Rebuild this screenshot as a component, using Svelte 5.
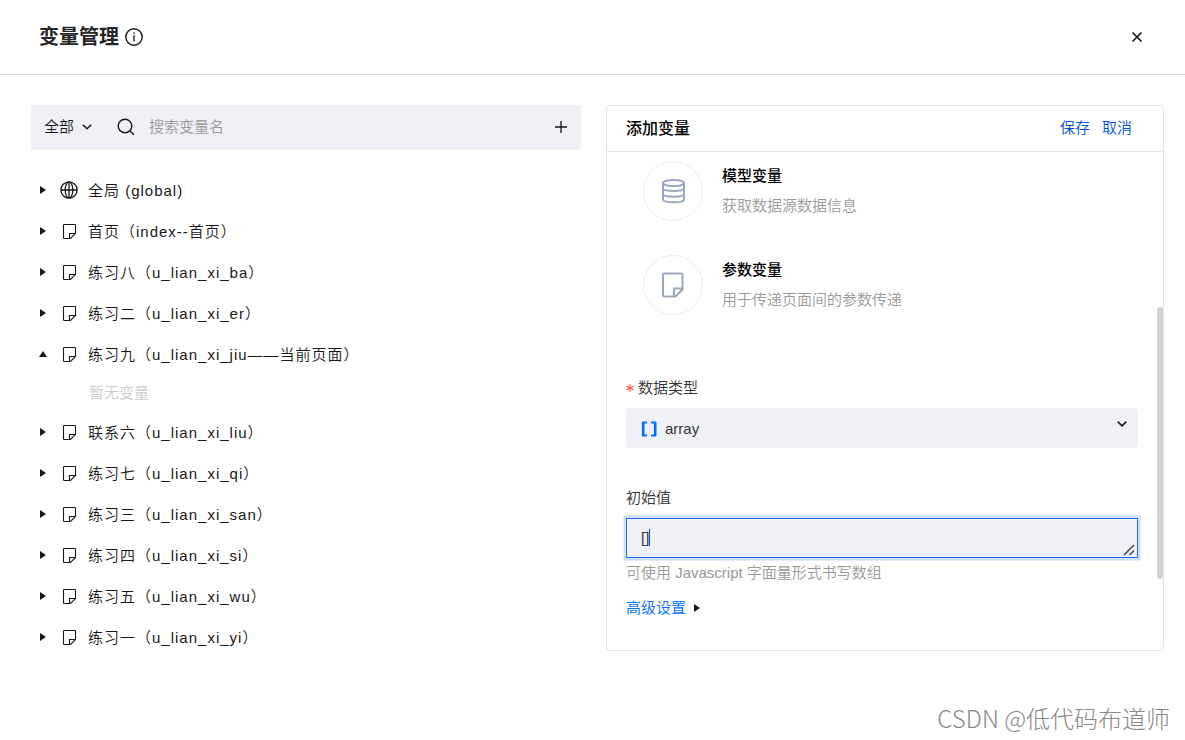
<script>
	let filter = $state('all');
	let keyword = $state('');
	let dataType = $state('array');
	let initialValue = $state('[]');
	let showAdvanced = $state(false);

	let groups = $state([
		{ label: '全局 (global)', icon: 'globe', open: false },
		{ label: '首页（index--首页）', icon: 'page', open: false },
		{ label: '练习八（u_lian_xi_ba）', icon: 'page', open: false },
		{ label: '练习二（u_lian_xi_er）', icon: 'page', open: false },
		{ label: '练习九（u_lian_xi_jiu——当前页面）', icon: 'page', open: true },
		{ label: '联系六（u_lian_xi_liu）', icon: 'page', open: false },
		{ label: '练习七（u_lian_xi_qi）', icon: 'page', open: false },
		{ label: '练习三（u_lian_xi_san）', icon: 'page', open: false },
		{ label: '练习四（u_lian_xi_si）', icon: 'page', open: false },
		{ label: '练习五（u_lian_xi_wu）', icon: 'page', open: false },
		{ label: '练习一（u_lian_xi_yi）', icon: 'page', open: false }
	]);

	let visibleGroups = $derived(groups.filter((g) => g.label.includes(keyword)));

	const kinds = [
		{ name: '模型变量', desc: '获取数据源数据信息', icon: 'database' },
		{ name: '参数变量', desc: '用于传递页面间的参数传递', icon: 'page' }
	];
</script>

<div class="dialog">
	<header class="dialog-head">
		<h1>变量管理</h1>
		<svg class="info" width="18" height="18" viewBox="0 0 18 18" fill="none" stroke="#181818">
			<circle cx="9" cy="9" r="8.2" stroke-width="1.4" />
			<path d="M9 7.2V13.6M9 4.2v1.6" stroke-width="1.3" />
		</svg>
		<button class="close" type="button" aria-label="关闭">
			<svg width="12" height="12" viewBox="0 0 12 12" stroke="#181818" stroke-width="1.7">
				<path d="M1.5 1.5l9 9M10.5 1.5l-9 9" />
			</svg>
		</button>
	</header>

	<main class="content">
		<section class="list">
			<div class="toolbar">
				<div class="filter">
					<select bind:value={filter} aria-label="范围">
						<option value="all">全部</option>
					</select>
					<svg width="10" height="6" viewBox="0 0 10 6" fill="none" stroke="#181818" stroke-width="1.5">
						<path d="M0.7 0.7L5 4.8 9.3 0.7" />
					</svg>
				</div>
				<label class="search">
					<svg width="18" height="18" viewBox="0 0 18 18" fill="none" stroke="#181818" stroke-width="1.4">
						<circle cx="8" cy="8" r="6.8" />
						<path d="M12.8 12.8l4.2 4" />
					</svg>
					<input type="text" placeholder="搜索变量名" aria-label="搜索变量名" bind:value={keyword} />
				</label>
				<button class="add" type="button" aria-label="添加">
					<svg width="12" height="12" viewBox="0 0 12 12" stroke="#181818" stroke-width="1.3">
						<path d="M6 0v12M0 6h12" />
					</svg>
				</button>
			</div>

			<ul class="tree">
				{#each visibleGroups as group}
					<li>
						<button class="node" type="button" aria-expanded={group.open} onclick={() => (group.open = !group.open)}>
							<svg class="arrow" width="8" height="8" viewBox="0 0 8 8" fill="#181818">
								{#if group.open}
									<path d="M0 7h8L4 1z" />
								{:else}
									<path d="M1 0v8l6-4z" />
								{/if}
							</svg>
							<svg width="18" height="18" viewBox="0 0 18 18" fill="none" stroke="#181818" stroke-width="1.3">
								{#if group.icon === 'globe'}
									<circle cx="9" cy="9" r="8.1" />
									<ellipse cx="9" cy="9" rx="3.8" ry="8.1" />
									<path d="M1 9h16M9 1v16" />
								{:else}
									<path d="M9.5 16.5H4.2Q3.5 16.5 3.5 15.8V3.2Q3.5 2.5 4.2 2.5H14.8Q15.5 2.5 15.5 3.2V11.5L10.5 16.5H9.2M9.5 16.5v-5h6" stroke-width="1.1" />
								{/if}
							</svg>
							<span>{group.label}</span>
						</button>
						{#if group.open}
							<p class="empty">暂无变量</p>
						{/if}
					</li>
				{/each}
			</ul>
		</section>

		<section class="panel">
			<div class="panel-head">
				<h2>添加变量</h2>
				<button class="text-btn" type="button">保存</button>
				<button class="text-btn" type="button">取消</button>
			</div>

			<form class="panel-body">
				<div class="kinds">
					{#each kinds as kind}
						<div class="kind">
							<span class="kind-icon">
								<svg width="26" height="26" viewBox="0 0 26 26" fill="none" stroke="#9aa7bf" stroke-width="2">
									{#if kind.icon === 'database'}
										<ellipse cx="13.5" cy="5" rx="10.5" ry="3" />
										<path d="M3 5V21.5C3 25.2 24 25.2 24 21.5V5M3 10.3C3 13.8 24 13.8 24 10.3M3 16C3 19.5 24 19.5 24 16" />
									{:else}
										<path d="M14.5 24.5H4Q3 24.5 3 23.5V2.5Q3 1.5 4 1.5H21.5Q22.5 1.5 22.5 2.5V17.5L15.5 24.5H14V16.5H22.5" />
									{/if}
								</svg>
							</span>
							<div>
								<h3>{kind.name}</h3>
								<p>{kind.desc}</p>
							</div>
						</div>
					{/each}
				</div>

				<div class="field">
					<label for="data-type">
						<svg class="req" width="8" height="8" viewBox="0 0 8 8" stroke="#fa4b4b" stroke-width="1.1">
							<path d="M4 0v8M0.5 2l7 4M7.5 2l-7 4" />
						</svg>
						数据类型
					</label>
					<div class="select-box">
						<select id="data-type" bind:value={dataType}>
							<option value="array">array</option>
						</select>
						<svg class="type-icon" width="16" height="16" viewBox="0 0 16 16" fill="none" stroke="#006eff">
							<path d="M6 1.5H2V14.5H6M10 1.5H14V14.5H10" stroke-width="2" />
							<path d="M2.2 1v14M14.2 1v14" stroke-width="2.6" />
						</svg>
						<svg class="chevron" width="10" height="6" viewBox="0 0 10 6" fill="none" stroke="#181818" stroke-width="1.6">
							<path d="M0.7 0.7L5 4.8 9.3 0.7" />
						</svg>
					</div>
				</div>

				<div class="field">
					<label for="initial-value">初始值</label>
					<div class="textarea-box">
						<textarea id="initial-value" rows="1" bind:value={initialValue}></textarea>
						<span class="caret"></span>
						<svg class="grip" width="12" height="12" viewBox="0 0 12 12" stroke="#444" stroke-width="1.5">
							<path d="M1 11L11 1M6.5 11L11 6.5" />
						</svg>
					</div>
					<p class="hint">可使用 Javascript 字面量形式书写数组</p>
				</div>

				<button class="advanced" type="button" aria-expanded={showAdvanced} onclick={() => (showAdvanced = !showAdvanced)}>
					高级设置
					<svg width="6" height="8" viewBox="0 0 6 8" fill="#181818">
						<path d="M0 0v8l6-4z" />
					</svg>
				</button>
			</form>
			<div class="scroll-thumb"></div>
		</section>
	</main>

	<footer class="credit">CSDN @低代码布道师</footer>
</div>

<style>
	:global(body) {
		background: #fff;
	}

	.dialog {
		font-family: 'Liberation Sans', 'Noto Sans CJK SC', sans-serif;
		font-size: 15px;
		font-weight: 350;
		color: #181818;
	}

	h1, h2, h3, p, ul {
		margin: 0;
		padding: 0;
	}

	button, input, select, textarea {
		font: inherit;
		color: inherit;
		margin: 0;
		padding: 0;
		border: none;
		background: none;
		outline: none;
	}

	button {
		cursor: pointer;
	}

	select {
		appearance: none;
	}

	svg {
		display: block;
		flex: none;
	}

	.dialog-head {
		display: flex;
		align-items: center;
		height: 74px;
		padding: 0 42px 0 39px;
		border-bottom: 1px solid #d8dae6;
	}

	h1 {
		font-size: 20px;
		font-weight: 700;
		line-height: 30px;
		color: #262626;
	}

	.info {
		margin-left: 6px;
	}

	.close {
		margin-left: auto;
	}

	.content {
		display: grid;
		grid-template-columns: minmax(0, 550px) 1fr;
		align-items: start;
		gap: 25px;
		padding: 30px 21px 0 31px;
	}

	.toolbar {
		display: flex;
		align-items: center;
		box-sizing: border-box;
		height: 45px;
		padding: 0 14px 2px 13px;
		background: #f0f1f6;
	}

	.filter {
		display: grid;
		align-items: center;
		width: 48px;
	}

	.filter > * {
		grid-area: 1 / 1;
	}

	.filter svg {
		justify-self: end;
		pointer-events: none;
	}

	.search {
		flex: 1;
		display: flex;
		align-items: center;
		gap: 14px;
		margin-left: 25px;
	}

	.search input {
		flex: 1;
		min-width: 0;
	}

	.search input::placeholder {
		color: #999;
		opacity: 1;
	}

	.tree {
		list-style: none;
		margin-top: 19px;
	}

	.node {
		display: flex;
		align-items: center;
		width: 100%;
		height: 41px;
		padding-left: 8px;
		letter-spacing: 1px;
		text-align: left;
		white-space: nowrap;
	}

	.arrow {
		margin-right: 13px;
	}

	.node span {
		margin-left: 10px;
	}

	.empty {
		padding-left: 58px;
		line-height: 37px;
		color: #ccc;
	}

	.panel {
		position: relative;
		border: 1px solid #e3e4e9;
		border-radius: 4px;
	}

	.panel-head {
		display: flex;
		align-items: center;
		gap: 12px;
		box-sizing: border-box;
		height: 46px;
		padding: 0 31px 4px 19px;
		border-bottom: 1px solid #e3e4e9;
	}

	h2 {
		flex: 1;
		font-size: 16px;
		font-weight: 500;
		color: #000;
	}

	.text-btn {
		color: #0052d9;
	}

	.panel-body {
		padding: 9px 25px 27px 19px;
	}

	.kinds {
		display: grid;
		gap: 34px;
		padding-left: 17px;
		margin-bottom: 53px;
	}

	.kind {
		display: flex;
		gap: 19px;
		line-height: 30px;
	}

	.kind-icon {
		display: grid;
		place-items: center;
		box-sizing: border-box;
		width: 60px;
		height: 60px;
		border: 1px solid #ececee;
		border-radius: 50%;
	}

	h3 {
		font-size: 15px;
		font-weight: 500;
		color: #000;
	}

	.kind p,
	.hint {
		color: #999;
	}

	.field label {
		display: flex;
		align-items: center;
		gap: 4px;
		line-height: 40px;
		color: #333;
	}

	.field + .field {
		margin-top: 30px;
	}

	.select-box,
	.textarea-box {
		position: relative;
	}

	.select-box select {
		display: block;
		width: 100%;
		height: 40px;
		padding-left: 39px;
		border-radius: 4px;
		background: #f0f1f6;
		color: #333;
	}

	.type-icon {
		position: absolute;
		top: 13px;
		left: 15px;
		pointer-events: none;
	}

	.chevron {
		position: absolute;
		top: 13px;
		right: 11px;
		pointer-events: none;
	}

	textarea {
		display: block;
		box-sizing: border-box;
		width: 100%;
		height: 40px;
		padding: 9px 14px;
		border: 1px solid #1f74e8;
		background: #f0f1f6;
		box-shadow: 0 0 0 2px #d0def5, 0 0 0 3px #e3ecfa;
		line-height: 20px;
		color: #333;
		resize: none;
	}

	.caret {
		position: absolute;
		top: 11px;
		left: 23px;
		width: 1px;
		height: 17px;
		background: #0052d9;
		pointer-events: none;
	}

	.grip {
		position: absolute;
		right: 3px;
		bottom: 2px;
		pointer-events: none;
	}

	.hint {
		line-height: 30px;
	}

	.advanced {
		display: flex;
		align-items: center;
		gap: 8px;
		margin-top: 5px;
		line-height: 30px;
		color: #006eff;
	}

	.scroll-thumb {
		position: absolute;
		top: 37%;
		right: 0;
		width: 6px;
		height: 50%;
		border-radius: 3px;
		background: #d3d3d3;
	}

	.credit {
		padding: 43px 15px 0 0;
		font-family: 'Noto Sans CJK SC', sans-serif;
		font-size: 24px;
		font-weight: 300;
		line-height: 36px;
		text-align: right;
		color: #888;
	}
</style>
